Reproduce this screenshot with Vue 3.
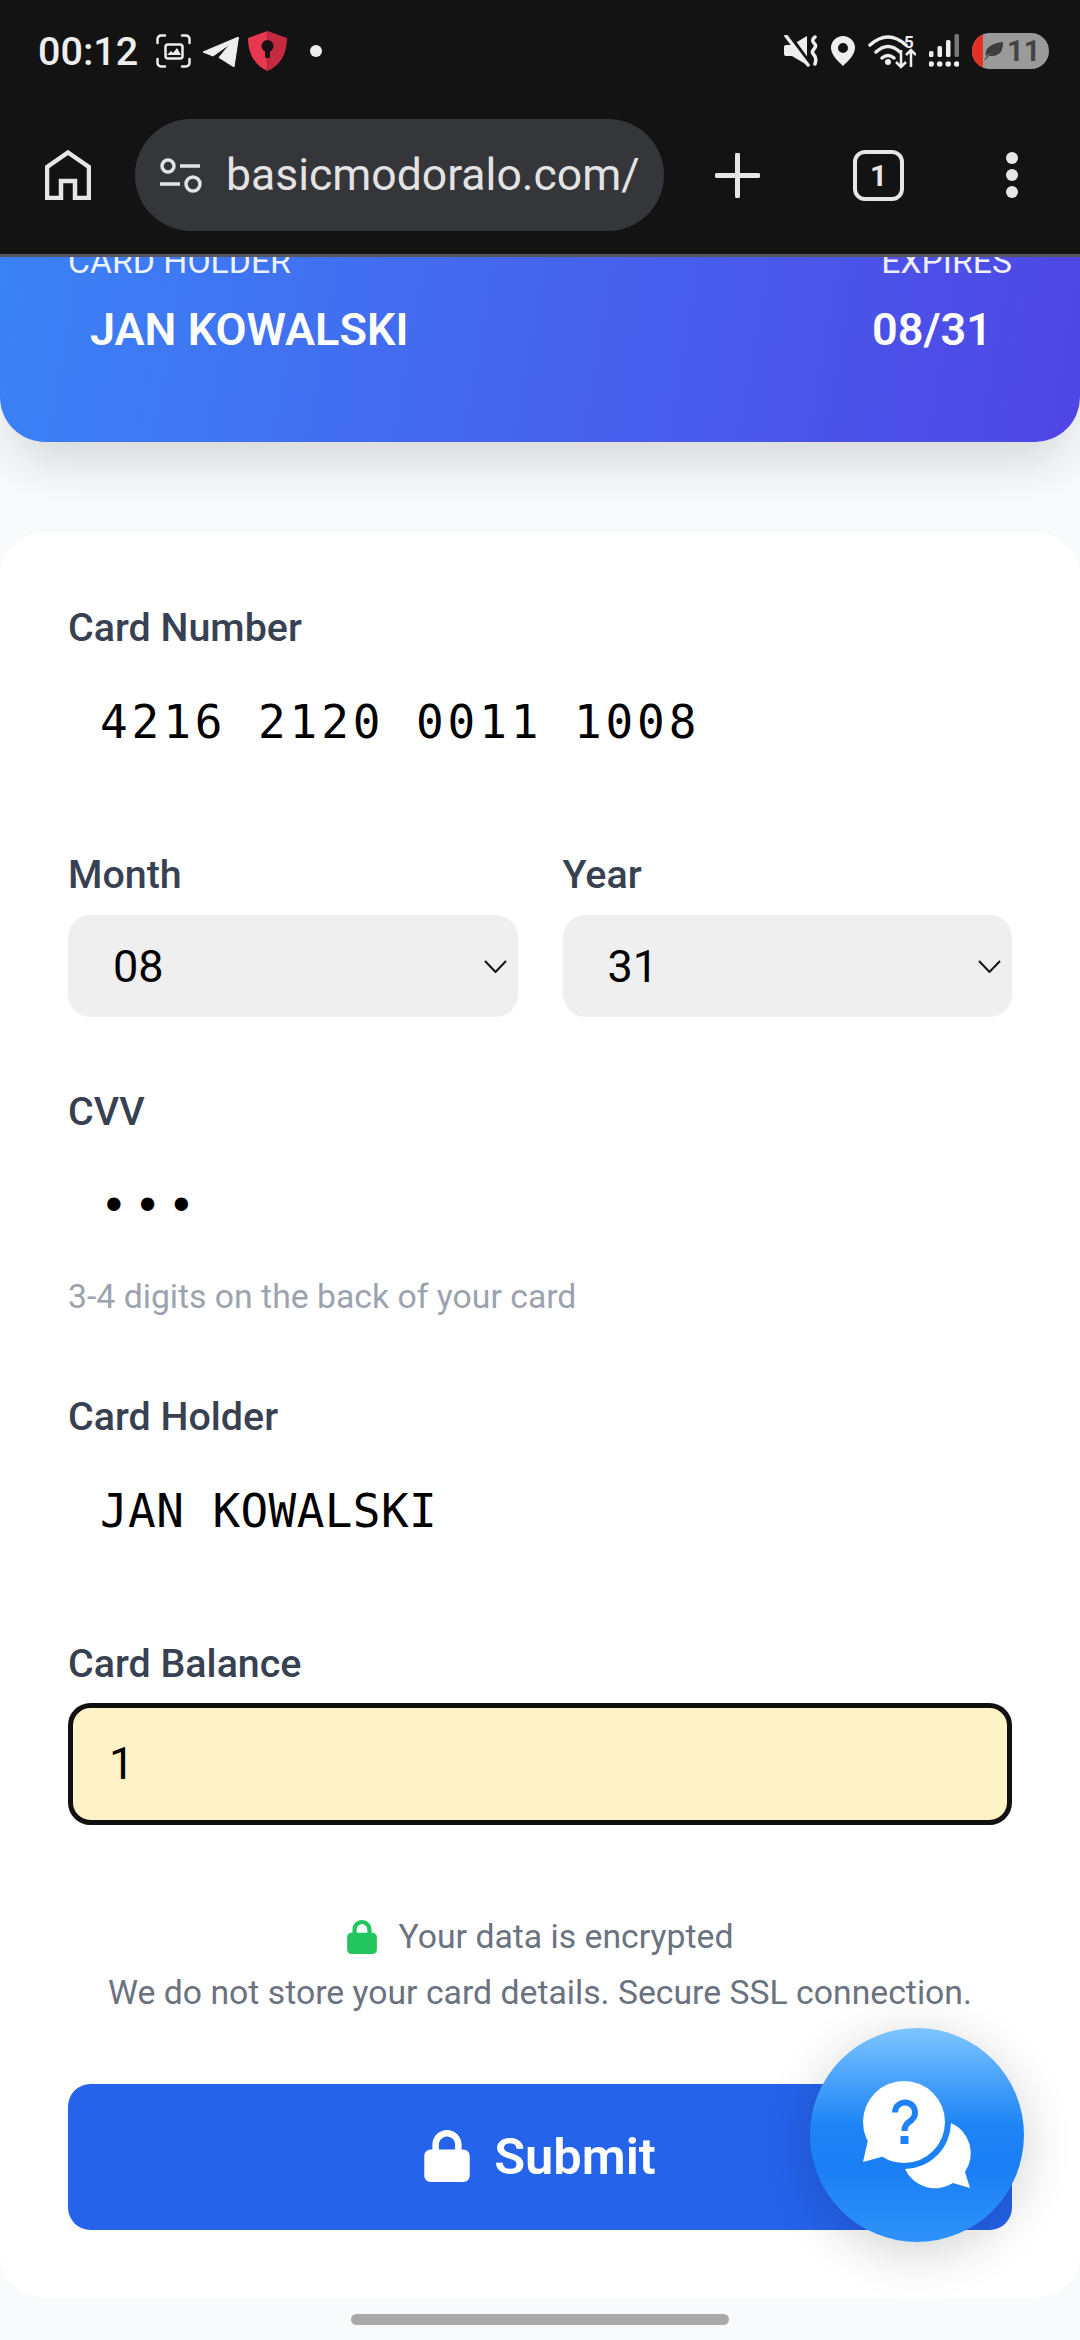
<template>
  <div class="page">
    <header class="chrome">
      <div class="status">
        <div class="status-left">
          <span class="time">00:12</span>
          <svg class="ic-shot" width="35" height="34" viewBox="0 0 35 34" fill="none" stroke="#eee" stroke-width="2.5" stroke-linecap="round">
            <path d="M1.5 9V5a3.5 3.5 0 0 1 3.5-3.5h4M26 1.5h4A3.5 3.5 0 0 1 33.500 5v4M33.500 25v4a3.500 3.500 0 0 1-3.500 3.500h-4M9 32.500H5A3.500 3.500 0 0 1 1.500 29v-4" />
            <rect x="9.500" y="10.500" width="17" height="14" rx="2.500" />
            <path d="M11 21l4-4 2 2 4-5 4 7H11z" fill="#eee" stroke="none" />
          </svg>
          <svg class="ic-tg" width="36" height="30" viewBox="0 0 36 30"><path d="M0 15 35.500 0 31 30 16 20.500 27 7 10 19z" fill="#eee" stroke="#eee" stroke-width="1" stroke-linejoin="round" /></svg>
          <svg class="ic-shield" width="39" height="40" viewBox="0 0 39 40">
            <path d="M19.500 0 0 7c0 15 6 27 19.500 33z" fill="#e8384f" />
            <path d="M19.500 0 39 7c0 15-6 27-19.500 33z" fill="#c42b3f" />
            <circle cx="19.500" cy="15" r="6" fill="#1a1114" />
            <rect x="17" y="17" width="5" height="10" rx="1" fill="#1a1114" />
          </svg>
          <span class="notif-dot"></span>
        </div>
        <div class="status-right">
          <svg width="34" height="32" viewBox="0 0 34 32">
            <path d="M0 12q0-2 2-2h6l15-9v29l-15-9H2q-2 0-2-2z" fill="#eee" />
            <path d="M5 0l21 29" stroke="#131313" stroke-width="4" />
            <path d="M2 1l22 29" stroke="#eee" stroke-width="3.500" stroke-linecap="round" />
            <path d="M31 2q-4 3-1 6t0 6q-3 3 0 6t1 9" fill="none" stroke="#eee" stroke-width="3.500" stroke-linecap="round" />
          </svg>
          <svg width="24" height="30" viewBox="0 0 24 30"><path fill-rule="evenodd" d="M12 0a12 12 0 0 1 12 12c0 7-8 14-12 18C8 26 0 19 0 12A12 12 0 0 1 12 0zm0 7a5 5 0 1 0 0 10 5 5 0 0 0 0-10z" fill="#eee" /></svg>
          <svg width="48" height="36" viewBox="0 -2 48 36" fill="none" stroke="#eee">
            <path d="M2 10Q20-6 38 10M8 17q12-11 24 0M14 23q6-5 12 0" stroke-width="3.500" stroke-linecap="round" />
            <circle cx="20" cy="27" r="3" fill="#eee" stroke="none" />
            <path d="M33 15v17m-5-5 5 5 5-5M43 32V15m-5 5 5-5 5 5" stroke-width="2.500" />
            <text x="36" y="13" class="wifi-num" fill="#eee" stroke="none">5</text>
          </svg>
          <svg width="30" height="34" viewBox="0 0 30 34" fill="#eee">
            <rect x="0" y="17" width="4.500" height="6" rx="1.500" />
            <rect x="8.500" y="12" width="4.500" height="11" rx="1.500" />
            <rect x="17" y="6" width="4.500" height="17" rx="1.500" />
            <rect x="25.500" y="0" width="4.500" height="23" rx="1.500" fill="#777" />
            <circle cx="2.200" cy="30" r="2.800" /><circle cx="10.700" cy="30" r="2.800" /><circle cx="19.200" cy="30" r="2.800" /><circle cx="27.700" cy="30" r="2.800" />
          </svg>
          <div class="battery">
            <span class="battery-low"></span>
            <svg width="19" height="18" viewBox="0 0 19 18"><path d="M0 18C3 14 6 12 10 10 6 12 3 13 2 14 0 6 8 1 19 0c0 9-3 15-14 14L1 18z" fill="#3d3d3d" /></svg>
            <span class="battery-num">11</span>
          </div>
        </div>
      </div>
      <div class="toolbar">
        <svg class="ic-home" width="46" height="50" viewBox="0 0 46 50"><path d="M23 2.500 44 17v31H30V31H16v17H2V17z" fill="none" stroke="#e6e6e6" stroke-width="4.500" /></svg>
        <div class="url-pill">
          <svg width="43" height="36" viewBox="0 0 43 36" fill="none" stroke="#e3e3e3" stroke-width="3.500">
            <circle cx="9" cy="9" r="6" /><path d="M21 9h20M1 27h20" /><circle cx="34" cy="27" r="7" />
          </svg>
          <span class="url-text">basicmodoralo.com/</span>
        </div>
        <svg class="ic-plus" width="45" height="45" viewBox="0 0 45 45"><path d="M22.500 2v41M2 22.500h41" stroke="#e6e6e6" stroke-width="5" stroke-linecap="round" /></svg>
        <div class="tab-count">1</div>
        <svg class="ic-more" width="12" height="46" viewBox="0 0 12 46" fill="#e6e6e6"><circle cx="6" cy="6" r="6" /><circle cx="6" cy="23" r="6" /><circle cx="6" cy="40" r="6" /></svg>
      </div>
    </header>

    <section class="hero">
      <div class="hero-row hero-labels">
        <span>CARD HOLDER</span>
        <span>EXPIRES</span>
      </div>
      <div class="hero-row hero-values">
        <span>{{ holder }}</span>
        <span>{{ month }}/{{ year }}</span>
      </div>
    </section>

    <main class="form-card">
      <div class="label">Card Number</div>
      <div class="plain-input spaced">{{ number }}</div>

      <div class="date-row">
        <div class="date-col">
          <div class="label">Month</div>
          <div class="select-box">
            <span>{{ month }}</span>
            <svg width="23" height="13" viewBox="0 0 23 13"><path d="M1 1l10.500 11L22 1" fill="none" stroke="#111" stroke-width="2" /></svg>
          </div>
        </div>
        <div class="date-col">
          <div class="label">Year</div>
          <div class="select-box">
            <span>{{ year }}</span>
            <svg width="23" height="13" viewBox="0 0 23 13"><path d="M1 1l10.500 11L22 1" fill="none" stroke="#111" stroke-width="2" /></svg>
          </div>
        </div>
      </div>

      <div class="label cvv-label">CVV</div>
      <div class="plain-input cvv">•••</div>
      <div class="hint">3-4 digits on the back of your card</div>

      <div class="label holder-label">Card Holder</div>
      <div class="plain-input name">{{ holder }}</div>

      <div class="label balance-label">Card Balance</div>
      <div class="balance-input">1</div>

      <div class="secure">
        <div class="secure-line">
          <svg width="30" height="34" viewBox="0 0 448 512"><path :d="lockPath" fill="#22c55e" /></svg>
          <span>Your data is encrypted</span>
        </div>
        <div>We do not store your card details. Secure SSL connection.</div>
      </div>

      <button class="submit" type="button">
        <svg width="46" height="52" viewBox="0 0 448 512"><path :d="lockPath" fill="#fff" /></svg>
        <span>Submit</span>
      </button>
    </main>

    <div class="home-bar"></div>

    <div class="help-fab">
      <svg width="214" height="214" viewBox="0 0 214 214">
        <circle cx="94" cy="94" r="41" fill="#fff" />
        <path d="M58 112 53 134 75 128z" fill="#fff" />
        <path d="M141 95A33 33 0 0 1 155 144L160 160 143 155A33 33 0 0 1 95 141A47 47 0 0 0 141 95z" fill="#fff" />
        <path d="M85 84.500a10 10 0 1 1 16 8c-4 3-6.500 5-6.500 10.500" fill="none" stroke="#1c82f5" stroke-width="6" />
        <rect x="90.500" y="108" width="8" height="8" fill="#1c82f5" />
      </svg>
    </div>
  </div>
</template>

<script setup>
const holder = 'JAN KOWALSKI'
const number = '4216 2120 0011 1008'
const month = '08'
const year = '31'
const lockPath = 'M144 144v48H304V144c0-44.2-35.8-80-80-80s-80 35.8-80 80zM80 192V144C80 64.5 144.5 0 224 0s144 64.5 144 144v48h16c35.3 0 64 28.7 64 64V448c0 35.3-28.7 64-64 64H64c-35.3 0-64-28.7-64-64V256c0-35.3 28.7-64 64-64H80z'
</script>

<style>
html, body {
  margin: 0;
  background: #f9fafb;
}
</style>

<style scoped>
.page {
  position: relative;
  width: 1080px;
  height: 2340px;
  overflow: hidden;
  background: #f9fafb;
  font-family: Roboto, "Liberation Sans", sans-serif;
}
.chrome {
  position: relative;
  z-index: 2;
  height: 254px;
  background: #131313;
  border-bottom: 3px solid #55565c;
}
.status {
  display: flex;
  align-items: center;
  justify-content: space-between;
  height: 102px;
  padding: 0 31px 0 38px;
}
.status-left,
.status-right {
  display: flex;
  align-items: center;
}
.time {
  width: 99px;
  color: #eee;
  font-size: 39.5px;
  font-weight: 500;
}
.ic-shot { margin-left: 19px; }
.ic-tg { margin-left: 12px; margin-top: 2px; }
.ic-shield { margin-left: 9px; }
.notif-dot {
  width: 12px;
  height: 12px;
  margin-left: 23px;
  border-radius: 50%;
  background: #eee;
}
.status-right {
  gap: 13px;
}
.wifi-num {
  font-family: Roboto, sans-serif;
  font-size: 17px;
  font-weight: 700;
}
.battery {
  position: relative;
  display: flex;
  align-items: center;
  gap: 4px;
  width: 77px;
  height: 36px;
  padding-left: 12px;
  box-sizing: border-box;
  overflow: hidden;
  border-radius: 18px;
  background: #9a9a9a;
}
.battery-low {
  position: absolute;
  left: 0;
  top: 0;
  width: 11px;
  height: 36px;
  background: #e53026;
}
.battery-num {
  color: #444;
  font-size: 29px;
  font-weight: 700;
}
.toolbar {
  display: flex;
  align-items: center;
  height: 146px;
  padding: 0 0 6px 45px;
}
.url-pill {
  display: flex;
  align-items: center;
  gap: 24px;
  width: 529px;
  height: 112px;
  margin-left: 44px;
  padding-left: 24px;
  box-sizing: border-box;
  border-radius: 56px;
  background: #35363a;
}
.url-text {
  color: #e3e3e3;
  font-size: 44.5px;
  white-space: nowrap;
}
.ic-plus { margin-left: 51px; }
.tab-count {
  display: flex;
  align-items: center;
  justify-content: center;
  width: 51px;
  height: 51px;
  margin-left: 93px;
  box-sizing: border-box;
  border: 4px solid #e6e6e6;
  border-radius: 12px;
  color: #e6e6e6;
  font-size: 30px;
  font-weight: 700;
}
.ic-more { margin-left: 102px; }

.hero {
  position: relative;
  z-index: 1;
  height: 185px;
  margin-bottom: 90px;
  padding: 0 68px;
  overflow: hidden;
  border-radius: 0 0 45px 45px;
  background: linear-gradient(100deg, #3b82f6, #4f46e5);
  box-shadow: 0 30px 50px -10px rgba(0, 0, 0, 0.14);
  color: #fff;
}
.hero-row {
  display: flex;
  justify-content: space-between;
}
.hero-labels {
  margin-top: -15px;
  font-size: 33.75px;
  line-height: 40px;
  color: rgba(255, 255, 255, 0.92);
}
.hero-values {
  margin-top: 20px;
  padding: 0 20px 0 22px;
  font-size: 45px;
  font-weight: 600;
  line-height: 56px;
}

.form-card {
  height: 1766px;
  padding: 72px 68px 0;
  box-sizing: border-box;
  border-radius: 45px;
  background: #fff;
}
.label {
  padding-top: 3px;
  color: #374151;
  font-size: 39.4px;
  font-weight: 500;
  line-height: 41px;
}
.plain-input {
  height: 108px;
  margin-top: 20px;
  padding-left: 32px;
  color: #000;
  font-family: "DejaVu Sans Mono", monospace;
  font-size: 46px;
  line-height: 108px;
  white-space: pre;
}
.spaced { letter-spacing: 3.9px; }
.name { letter-spacing: 0.4px; }
.cvv { letter-spacing: 6px; }
.date-row {
  display: flex;
  gap: 45px;
  margin-top: 75px;
}
.date-col { flex: 1; }
.select-box {
  display: flex;
  align-items: center;
  justify-content: space-between;
  height: 102px;
  margin-top: 20px;
  padding: 0 11px 0 45px;
  border-radius: 22.5px;
  background: #efefef;
  color: #000;
  font-size: 45px;
}
.cvv-label { margin-top: 71px; }
.hint {
  margin-top: 15px;
  color: #9ca3af;
  font-size: 33.75px;
  line-height: 44px;
}
.holder-label { margin-top: 74px; }
.balance-label { margin-top: 75px; }
.balance-input {
  height: 122px;
  margin-top: 19px;
  padding-left: 36px;
  box-sizing: border-box;
  border: 5px solid #111;
  border-radius: 22.5px;
  background: #fef3c7;
  color: #000;
  font-size: 45px;
  line-height: 112px;
}
.secure {
  margin-top: 84px;
  color: #6b7280;
  font-size: 33.75px;
  line-height: 56px;
  text-align: center;
}
.secure-line {
  display: flex;
  align-items: center;
  justify-content: center;
  gap: 22px;
}
.submit {
  display: flex;
  align-items: center;
  justify-content: center;
  gap: 24px;
  width: 100%;
  height: 146px;
  margin-top: 63px;
  padding: 0 0 2px;
  border: 0;
  border-radius: 22.5px;
  background: #2563eb;
  color: #fff;
  font-family: inherit;
  font-size: 50.6px;
  font-weight: 600;
}
.home-bar {
  width: 378px;
  height: 11px;
  margin: 16px auto 0;
  border-radius: 6px;
  background: #aaa;
}
.help-fab {
  position: absolute;
  left: 810px;
  top: 2028px;
  z-index: 3;
  width: 214px;
  height: 214px;
  border-radius: 50%;
  background: linear-gradient(180deg, #7ec5ff 0%, #4ea5fb 22%, #1f85f6 45%, #1a7ff5 65%, #2f92f9 100%);
  box-shadow: 0 10px 50px rgba(0, 0, 0, 0.18);
}
</style>
